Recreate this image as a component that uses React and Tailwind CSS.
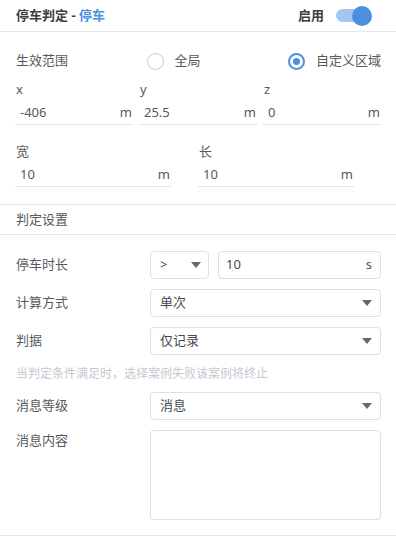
import React from "react";

function Caret() {
  return (
    <svg width="10" height="6" viewBox="0 0 10 6" className="shrink-0">
      <path d="M0 0 L10 0 L5 6 Z" fill="#5b6b7b" />
    </svg>
  );
}

function UnderInput({ value, unit, className = "" }) {
  return (
    <div className={`flex items-center justify-between h-[24px] border-b border-[#e1e4ea] pl-[5px] pr-[1px] ${className}`}>
      <span className="text-[13px] text-[#555a60]">{value}</span>
      <span className="text-[13px] text-[#555a60]">{unit}</span>
    </div>
  );
}

function Select({ value }) {
  return (
    <div className="flex-1 h-[28px] flex items-center justify-between border border-[#dcdfe6] rounded-[4px] pl-[9px] pr-[8px]">
      <span className="text-[13px] text-[#444a50]">{value}</span>
      <Caret />
    </div>
  );
}

function Row({ label, children }) {
  return (
    <div className="flex items-center">
      <div className="w-[134px] text-[13px] text-[#555a60]">{label}</div>
      <div className="flex-1 flex gap-[9px]">{children}</div>
    </div>
  );
}

export default function App() {
  return (
    <div className="w-[396px] h-[537px] bg-white overflow-hidden" style={{ fontFamily: '"Noto Sans", "Noto Sans CJK SC", sans-serif' }}>
      {/* header */}
      <div className="h-[32px] flex items-center justify-between pl-[16px] pr-[24px] border-b border-[#e4e7ed]">
        <div className="text-[13px] font-bold text-[#3a3f45]">
          停车判定 - <span className="text-[#4a8fe0]">停车</span>
        </div>
        <div className="flex items-center gap-[12px]">
          <span className="text-[13px] font-bold text-[#3a3f45]">启用</span>
          <div className="relative w-[36px] h-[20px] flex items-center">
            <div className="w-[30px] h-[13px] rounded-full bg-[#a3c6f1]" />
            <div className="absolute right-0 top-0 w-[20px] h-[20px] rounded-full bg-[#4a8fe0]" />
          </div>
        </div>
      </div>

      <div className="px-[15px]">
        {/* scope */}
        <div className="h-[46px] mt-[6px] flex items-center pl-[1px] whitespace-nowrap">
          <span className="w-[132px] text-[13px] text-[#555a60]">生效范围</span>
          <div className="flex items-center gap-[11px] w-[143px]">
            <span className="w-[17px] h-[17px] rounded-full border border-[#c4c8ce]" />
            <span className="text-[13px] text-[#555a60]">全局</span>
          </div>
          <div className="flex items-center gap-[11px]">
            <span className="w-[17px] h-[17px] rounded-full border-2 border-[#4a8fe0] flex items-center justify-center">
              <span className="w-[7px] h-[7px] rounded-full bg-[#4a8fe0]" />
            </span>
            <span className="text-[13px] text-[#555a60]">自定义区域</span>
          </div>
        </div>

        {/* xyz */}
        <div className="grid grid-cols-3 gap-x-[6px]">
          {[
            ["x", "-406"],
            ["y", "25.5"],
            ["z", "0"],
          ].map(([l, v]) => (
            <div key={l}>
              <div className="h-[12px] flex items-center pl-[1px] text-[13px] text-[#555a60]">{l}</div>
              <UnderInput value={v} unit="m" className="mt-[5px]" />
            </div>
          ))}
        </div>

        {/* size */}
        <div className="flex mt-[20px]">
          {[
            ["宽", "10"],
            ["长", "10"],
          ].map(([l, v]) => (
            <div key={l} className="w-[187px]">
              <div className="h-[14px] flex items-center pl-[1px] text-[13px] text-[#555a60]">{l}</div>
              <UnderInput value={v} unit="m" className="w-[156px] mt-[4px]" />
            </div>
          ))}
        </div>
      </div>

      <div className="mt-[17px] border-t border-[#e4e7ed]" />
      <div className="h-[30px] flex items-center pl-[16px] text-[13px] text-[#555a60] border-b border-[#e4e7ed]">判定设置</div>

      <div className="pl-[16px] pr-[15px] pt-[16px] flex flex-col gap-[10px]">
        <Row label="停车时长">
          <div className="w-[59px] h-[28px] flex items-center justify-between border border-[#dcdfe6] rounded-[4px] pl-[9px] pr-[7px]">
            <span className="text-[13px] text-[#444a50]">&gt;</span>
            <Caret />
          </div>
          <div className="flex-1 h-[28px] flex items-center justify-between border border-[#dcdfe6] rounded-[4px] pl-[7px] pr-[8px]">
            <span className="text-[13px] text-[#444a50]">10</span>
            <span className="text-[13px] text-[#555a60]">s</span>
          </div>
        </Row>
        <Row label="计算方式">
          <Select value="单次" />
        </Row>
        <Row label="判据">
          <Select value="仅记录" />
        </Row>
      </div>
      <div className="pl-[16px] h-[37px] flex items-center text-[12px] text-[#c3c8d0]">当判定条件满足时，选择案例失败该案例将终止</div>

      <div className="pl-[16px] pr-[15px] flex flex-col gap-[10px]">
        <Row label="消息等级">
          <Select value="消息" />
        </Row>
        <div className="flex items-start">
          <div className="w-[134px] pt-[1px] text-[13px] text-[#555a60]">消息内容</div>
          <div className="flex-1 h-[90px] border border-[#dcdfe6] rounded-[4px]" />
        </div>
      </div>
      <div className="mt-[15px] border-t border-[#e4e7ed]" />
    </div>
  );
}
